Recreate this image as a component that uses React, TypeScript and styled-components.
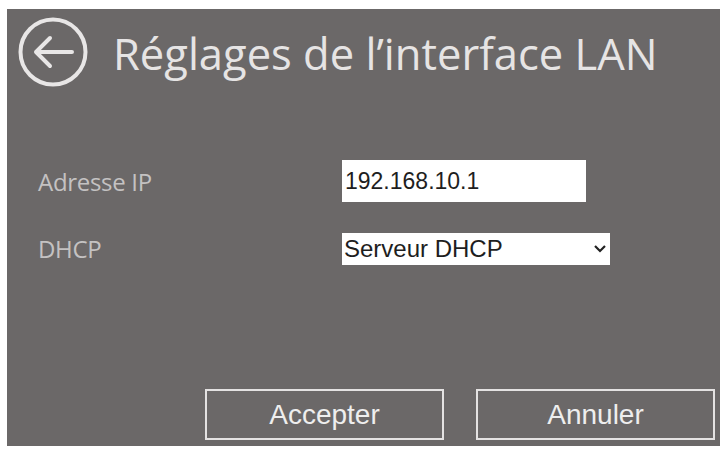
import React from 'react';
import styled, { createGlobalStyle } from 'styled-components';

const GlobalStyle = createGlobalStyle`
  body {
    margin: 0;
    background: #ffffff;
  }
`;

const Panel = styled.div`
  box-sizing: border-box;
  width: 713px;
  height: 437px;
  margin: 9px 0 0 7px;
  background: #6b6868;
  display: flex;
  flex-direction: column;
  padding: 7px 5px 6px 10px;
`;

const Header = styled.div`
  display: flex;
  align-items: center;
`;

const BackIcon = styled.svg`
  width: 72px;
  height: 72px;
  flex-shrink: 0;
`;

const Title = styled.h1`
  margin: 4px 0 0 24px;
  font-family: 'Open Sans', 'Noto Sans', sans-serif;
  font-weight: 400;
  font-size: 43.5px;
  line-height: 1;
  color: #e6e4e4;
  white-space: nowrap;
`;

const Form = styled.div`
  display: grid;
  grid-template-columns: 304px auto;
  row-gap: 30px;
  margin: 72px 0 0 21px;
  align-items: center;
  justify-items: start;
`;

const Label = styled.label`
  font-family: 'Open Sans', 'Noto Sans', sans-serif;
  font-weight: 400;
  font-size: 24px;
  letter-spacing: -0.3px;
  color: #c4c2c2;
`;

const TextInput = styled.input`
  box-sizing: border-box;
  width: 244px;
  height: 42px;
  border: none;
  outline: none;
  padding: 0 3px;
  background: #ffffff;
  font-family: 'Liberation Sans', Arial, sans-serif;
  font-size: 23px;
  color: #1e1e1e;
`;

const SelectBox = styled.div`
  box-sizing: border-box;
  width: 268px;
  height: 32px;
  background: #ffffff;
  display: flex;
  align-items: center;
  justify-content: space-between;
  padding: 0 3px 0 2px;
  font-family: 'Liberation Sans', Arial, sans-serif;
  font-size: 24px;
  color: #1e1e1e;
`;

const Chevron = styled.svg`
  width: 14px;
  height: 10px;
`;

const Footer = styled.div`
  margin-top: auto;
  display: flex;
  justify-content: flex-end;
  gap: 32px;
`;

const Button = styled.button`
  box-sizing: border-box;
  width: 239px;
  height: 51px;
  background: transparent;
  border: 2px solid #e4e2e2;
  font-family: 'Liberation Sans', Arial, sans-serif;
  font-size: 28px;
  color: #eeeeee;
  padding: 0;
  cursor: pointer;
`;

export default function App() {
  return (
    <>
      <GlobalStyle />
      <Panel>
        <Header>
          <BackIcon viewBox="0 0 72 72" fill="none">
            <circle cx="36" cy="36" r="32.5" stroke="#e8e6e6" strokeWidth="4" />
            <path d="M55 36H19M33 22L19 36L33 50" stroke="#e8e6e6" strokeWidth="4" strokeLinecap="round" strokeLinejoin="round" />
          </BackIcon>
          <Title>Réglages de l’interface LAN</Title>
        </Header>
        <Form>
          <Label>Adresse IP</Label>
          <TextInput defaultValue="192.168.10.1" />
          <Label>DHCP</Label>
          <SelectBox>
            <span>Serveur DHCP</span>
            <Chevron viewBox="0 0 14 10" fill="none">
              <path d="M2 2L7 7L12 2" stroke="#222" strokeWidth="2.2" />
            </Chevron>
          </SelectBox>
        </Form>
        <Footer>
          <Button>Accepter</Button>
          <Button>Annuler</Button>
        </Footer>
      </Panel>
    </>
  );
}
